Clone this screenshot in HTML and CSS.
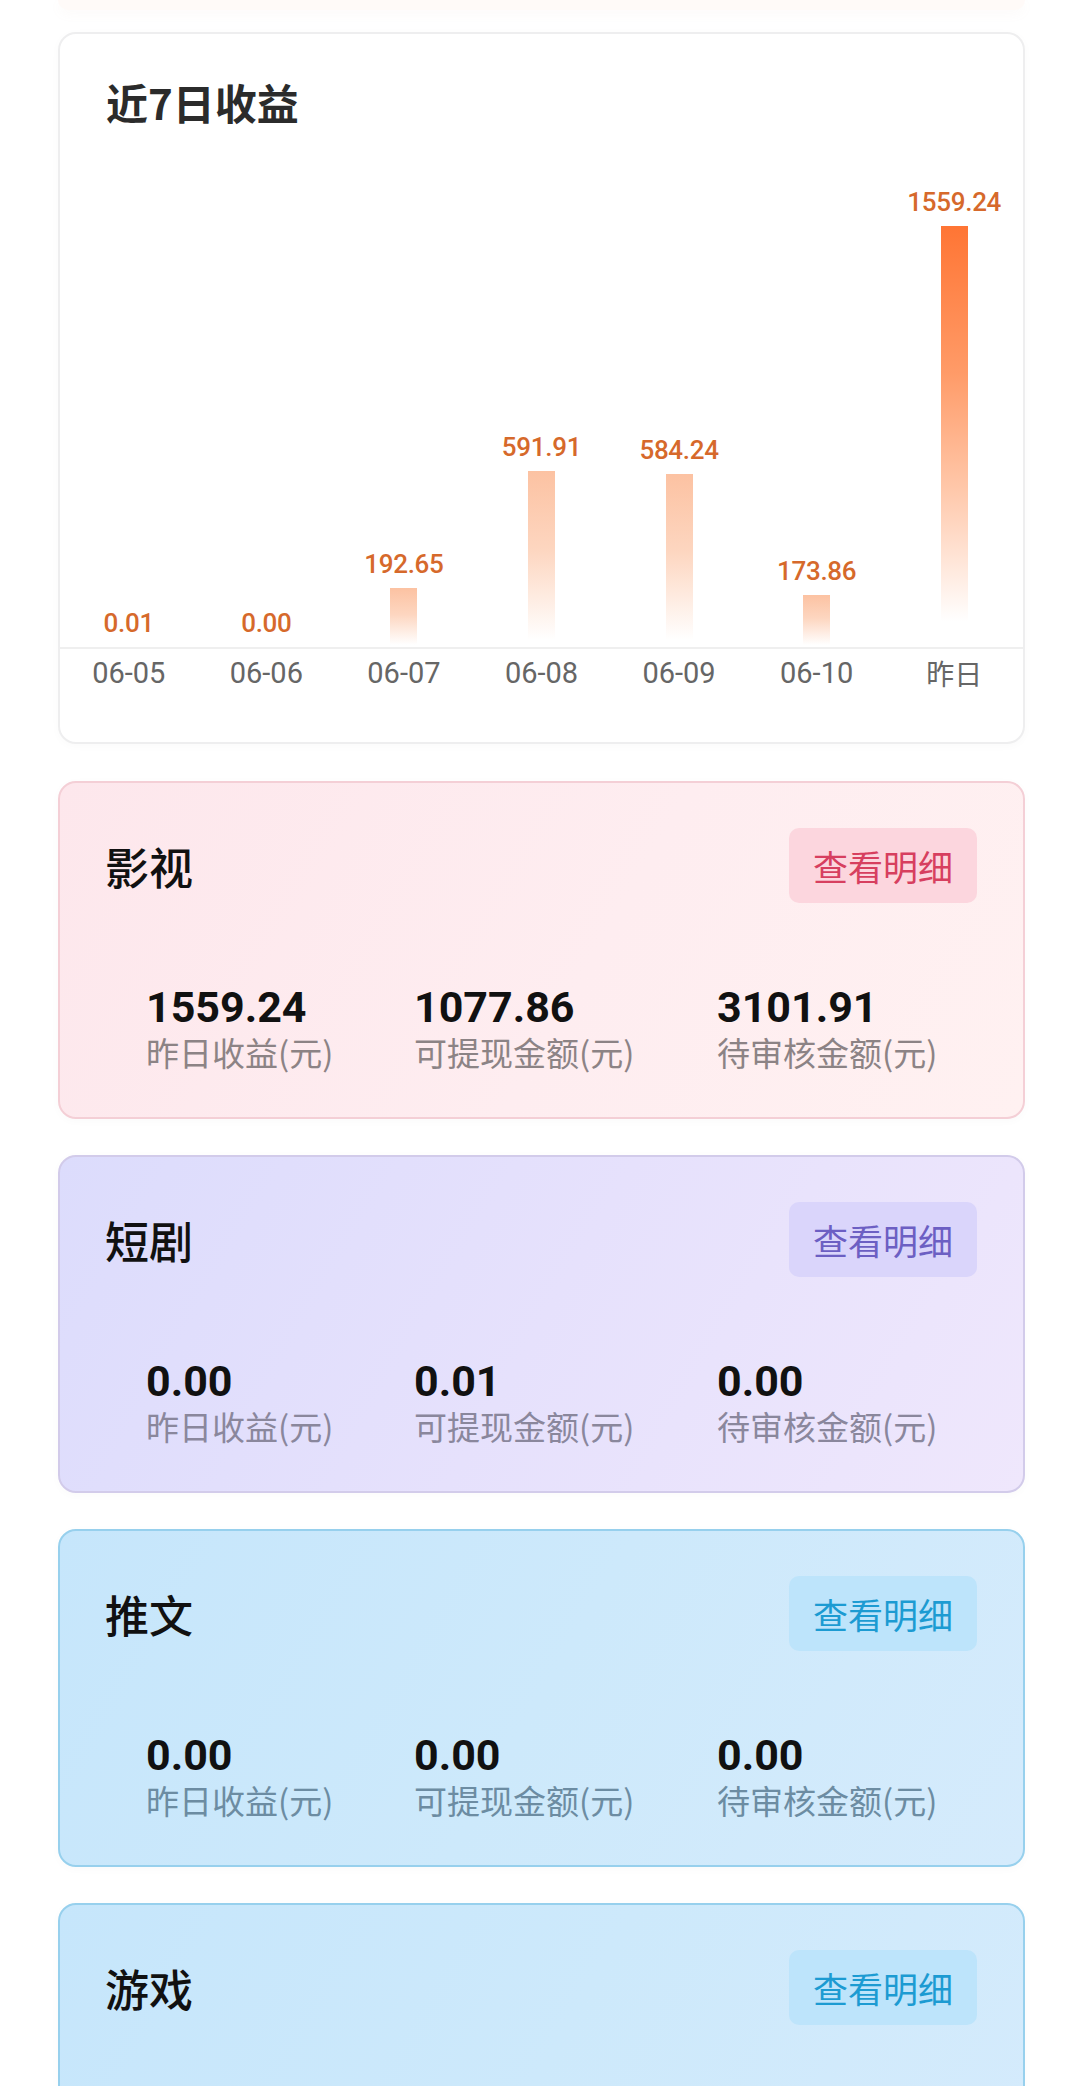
FILE: index.html
```html
<!DOCTYPE html>
<html lang="zh-CN">
<head>
<meta charset="utf-8">
<title>收益</title>
<link rel="stylesheet" href="styles.css">
</head>
<body>
<div class="prev"></div>

<section class="chart-card">
  <h2 class="chart-title">近7日收益</h2>
  <div class="plot">
    <div class="col"><span class="val">0.01</span><div class="bar" style="height:0px"></div></div>
    <div class="col"><span class="val">0.00</span><div class="bar" style="height:0px"></div></div>
    <div class="col"><span class="val">192.65</span><div class="bar" style="height:59px"></div></div>
    <div class="col"><span class="val">591.91</span><div class="bar" style="height:176px"></div></div>
    <div class="col"><span class="val">584.24</span><div class="bar" style="height:173px"></div></div>
    <div class="col"><span class="val">173.86</span><div class="bar" style="height:52px"></div></div>
    <div class="col"><span class="val">1559.24</span><div class="bar hl" style="height:421px"></div></div>
  </div>
  <div class="axis">
    <span>06-05</span><span>06-06</span><span>06-07</span><span>06-08</span><span>06-09</span><span>06-10</span><span class="cjk">昨日</span>
  </div>
</section>

<section class="card pink">
  <div class="card-head">
    <h3 class="card-title">影视</h3>
    <span class="btn">查看明细</span>
  </div>
  <div class="stats">
    <div class="stat"><div class="num">1559.24</div><div class="lbl">昨日收益(元)</div></div>
    <div class="stat"><div class="num">1077.86</div><div class="lbl">可提现金额(元)</div></div>
    <div class="stat"><div class="num">3101.91</div><div class="lbl">待审核金额(元)</div></div>
  </div>
</section>

<section class="card purple">
  <div class="card-head">
    <h3 class="card-title">短剧</h3>
    <span class="btn">查看明细</span>
  </div>
  <div class="stats">
    <div class="stat"><div class="num">0.00</div><div class="lbl">昨日收益(元)</div></div>
    <div class="stat"><div class="num">0.01</div><div class="lbl">可提现金额(元)</div></div>
    <div class="stat"><div class="num">0.00</div><div class="lbl">待审核金额(元)</div></div>
  </div>
</section>

<section class="card blue">
  <div class="card-head">
    <h3 class="card-title">推文</h3>
    <span class="btn">查看明细</span>
  </div>
  <div class="stats">
    <div class="stat"><div class="num">0.00</div><div class="lbl">昨日收益(元)</div></div>
    <div class="stat"><div class="num">0.00</div><div class="lbl">可提现金额(元)</div></div>
    <div class="stat"><div class="num">0.00</div><div class="lbl">待审核金额(元)</div></div>
  </div>
</section>

<section class="card blue">
  <div class="card-head">
    <h3 class="card-title">游戏</h3>
    <span class="btn">查看明细</span>
  </div>
  <div class="stats">
    <div class="stat"><div class="num">0.00</div><div class="lbl">昨日收益(元)</div></div>
    <div class="stat"><div class="num">0.00</div><div class="lbl">可提现金额(元)</div></div>
    <div class="stat"><div class="num">0.00</div><div class="lbl">待审核金额(元)</div></div>
  </div>
</section>
</body>
</html>
```
FILE: styles.css
```css
* { box-sizing: border-box; }
html, body {
  margin: 0;
  padding: 0;
  background: #ffffff;
  font-family: "Noto Sans CJK SC", "Roboto", sans-serif;
}
body { padding-bottom: 40px; }

.prev {
  height: 10px;
  margin: 0 55px 0 58px;
  background: #fffaf8;
  border-radius: 0 0 18px 18px;
  box-shadow: 0 4px 12px rgba(200, 150, 130, 0.05);
}

.chart-card {
  margin: 22px 55px 0 58px;
  border: 2px solid #eeeeef;
  border-radius: 18px;
  background: #ffffff;
  padding: 43px 0 45px;
  box-shadow: 0 2px 10px rgba(0, 0, 0, 0.025);
}
.chart-title {
  margin: 0;
  padding-left: 46px;
  font-size: 42px;
  line-height: 49px;
  font-weight: 700;
  color: #2b2b2b;
}
.plot {
  height: 521px;
  display: grid;
  grid-template-columns: repeat(7, 1fr);
}
.col {
  display: flex;
  flex-direction: column;
  justify-content: flex-end;
  align-items: center;
}
.val {
  font-family: "Roboto", sans-serif;
  font-weight: 500;
  font-size: 26px;
  letter-spacing: -0.3px;
  line-height: 30px;
  color: #d6692b;
  margin-bottom: 9px;
}
.bar {
  width: 27px;
  background: linear-gradient(to bottom, #fcc2a2 0%, #fdd6c0 45%, rgba(255, 255, 255, 0) 96%);
}
.bar.hl {
  background: linear-gradient(to bottom, #ff7534 0%, #ff9b68 35%, #ffc7a9 62%, #ffe6d9 80%, rgba(255, 255, 255, 0) 94%);
}
.axis {
  display: grid;
  grid-template-columns: repeat(7, 1fr);
  border-top: 2px solid #efefef;
}
.axis span {
  text-align: center;
  font-family: "Roboto", "Noto Sans CJK SC", sans-serif;
  font-size: 29px;
  line-height: 48px;
  color: #666666;
}
.axis .cjk { font-family: "Noto Sans CJK SC", sans-serif; font-size: 28px; }

.card {
  margin: 37px 55px 0 58px;
  height: 338px;
  border: 2px solid var(--bd);
  border-radius: 18px;
  background: var(--bg);
  padding: 45px 46px 0 45px;
  box-shadow: 0 2px 10px rgba(0, 0, 0, 0.025);
}
.card + .card { margin-top: 36px; }
.pink {
  --bg: linear-gradient(120deg, #fde7ec 0%, #feedf0 55%, #fff1f1 100%);
  --bd: #f4cfd6;
  --btn: #fcd6de;
  --btn-text: #d73f5f;
  --lbl: #8c8385;
}
.purple {
  --bg: linear-gradient(120deg, #dcdcfc 0%, #e6e1fc 50%, #efe7fc 100%);
  --bd: #d2cbea;
  --btn: #dad5fb;
  --btn-text: #6c5fc3;
  --lbl: #8a879c;
}
.blue {
  --bg: linear-gradient(120deg, #c6e6fb 0%, #cde9fb 50%, #d5ebfc 100%);
  --bd: #97d0ed;
  --btn: #bde4fb;
  --btn-text: #1c9bd2;
  --lbl: #6c8ca2;
}
.card-head {
  display: flex;
  justify-content: space-between;
  align-items: center;
  height: 75px;
}
.card-title {
  margin: 0;
  font-size: 44px;
  line-height: 50px;
  font-weight: 500;
  color: #111111;
}
.btn {
  width: 188px;
  height: 75px;
  border-radius: 10px;
  background: var(--btn);
  color: var(--btn-text);
  font-size: 35px;
  display: flex;
  align-items: center;
  justify-content: center;
}
.stats {
  margin-top: 79px;
  padding-left: 41px;
  display: grid;
  grid-template-columns: 268px 303px 1fr;
}
.num {
  font-family: "Roboto", sans-serif;
  font-weight: 700;
  font-size: 43px;
  line-height: 50px;
  color: #111111;
}
.lbl {
  font-size: 33px;
  line-height: 40px;
  color: var(--lbl);
  white-space: nowrap;
}
```
